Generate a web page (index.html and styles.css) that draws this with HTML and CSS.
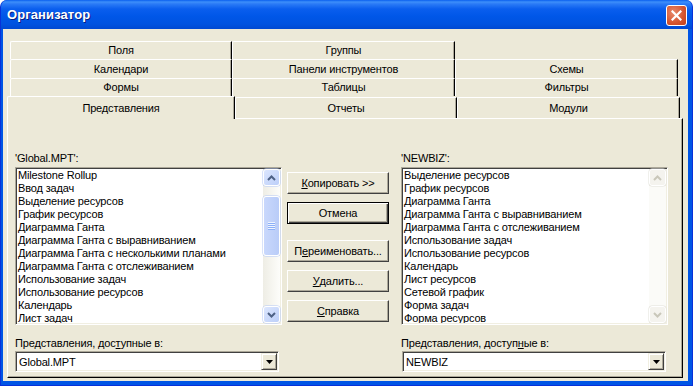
FILE: index.html
```html
<!DOCTYPE html>
<html lang="ru">
<head>
    <meta charset="UTF-8">
    <title>Организатор</title>
    <link rel="stylesheet" href="styles.css">
</head>
<body>
    <div class="window">
        <div class="titlebar">
            <span class="title">Организатор</span>
            <div class="close-btn">
                <svg width="11" height="11" viewBox="0 0 11 11"><path d="M1.5 1.5 L9.5 9.5 M9.5 1.5 L1.5 9.5" stroke="#fff" stroke-width="2.2" stroke-linecap="square"/></svg>
            </div>
        </div>
        <div class="client">
            <div class="tabs">
                <div class="tab-row">
                    <div class="tab tab-first">Поля</div>
                    <div class="tab">Группы</div>
                </div>
                <div class="tab-row">
                    <div class="tab tab-first">Календари</div>
                    <div class="tab">Панели инструментов</div>
                    <div class="tab">Схемы</div>
                </div>
                <div class="tab-row">
                    <div class="tab tab-first">Формы</div>
                    <div class="tab">Таблицы</div>
                    <div class="tab">Фильтры</div>
                </div>
                <div class="tab-row tab-row-front">
                    <div class="tab tab-active">Представления</div>
                    <div class="tab tab-mid">Отчеты</div>
                    <div class="tab">Модули</div>
                </div>
            </div>
            <div class="panel">
                <div class="side">
                    <div class="label">'Global.MPT':</div>
                    <div class="list">
                        <div class="items">
                            <div class="item">Milestone Rollup</div>
                            <div class="item">Ввод задач</div>
                            <div class="item">Выделение ресурсов</div>
                            <div class="item">График ресурсов</div>
                            <div class="item">Диаграмма Ганта</div>
                            <div class="item">Диаграмма Ганта с выравниванием</div>
                            <div class="item">Диаграмма Ганта с несколькими планами</div>
                            <div class="item">Диаграмма Ганта с отслеживанием</div>
                            <div class="item">Использование задач</div>
                            <div class="item">Использование ресурсов</div>
                            <div class="item">Календарь</div>
                            <div class="item">Лист задач</div>
                        </div>
                        <div class="scrollbar">
                            <div class="sb-btn">
                                <svg width="9" height="6" viewBox="0 0 9 6"><polyline points="1,5 4.5,1.5 8,5" fill="none" stroke="#4D6185" stroke-width="2"/></svg>
                            </div>
                            <div class="sb-track">
                                <div class="sb-thumb"><div class="grip"></div></div>
                            </div>
                            <div class="sb-btn">
                                <svg width="9" height="6" viewBox="0 0 9 6"><polyline points="1,1 4.5,4.5 8,1" fill="none" stroke="#4D6185" stroke-width="2"/></svg>
                            </div>
                        </div>
                    </div>
                    <div class="label label-bottom">Представления, дос<u>т</u>упные в:</div>
                    <div class="combo">
                        <span class="combo-text">Global.MPT</span>
                        <div class="combo-btn">
                            <svg width="7" height="4" viewBox="0 0 7 4"><polygon points="0,0 7,0 3.5,4" fill="#000"/></svg>
                        </div>
                    </div>
                </div>

                <div class="actions">
                    <div class="btn"><u>К</u>опировать &gt;&gt;</div>
                    <div class="btn btn-default">Отмена</div>
                    <div class="btn btn-gap">П<u>е</u>реименовать...</div>
                    <div class="btn"><u>У</u>далить...</div>
                    <div class="btn"><u>С</u>правка</div>
                </div>

                <div class="side">
                    <div class="label">'NEWBIZ':</div>
                    <div class="list">
                        <div class="items">
                            <div class="item">Выделение ресурсов</div>
                            <div class="item">График ресурсов</div>
                            <div class="item">Диаграмма Ганта</div>
                            <div class="item">Диаграмма Ганта с выравниванием</div>
                            <div class="item">Диаграмма Ганта с отслеживанием</div>
                            <div class="item">Использование задач</div>
                            <div class="item">Использование ресурсов</div>
                            <div class="item">Календарь</div>
                            <div class="item">Лист ресурсов</div>
                            <div class="item">Сетевой график</div>
                            <div class="item">Форма задач</div>
                            <div class="item">Форма ресурсов</div>
                        </div>
                        <div class="scrollbar scrollbar-off">
                            <div class="sb-btn">
                                <svg width="9" height="6" viewBox="0 0 9 6"><polyline points="1,5 4.5,1.5 8,5" fill="none" stroke="#C9C7BA" stroke-width="2"/></svg>
                            </div>
                            <div class="sb-track"></div>
                            <div class="sb-btn">
                                <svg width="9" height="6" viewBox="0 0 9 6"><polyline points="1,1 4.5,4.5 8,1" fill="none" stroke="#C9C7BA" stroke-width="2"/></svg>
                            </div>
                        </div>
                    </div>
                    <div class="label label-bottom">Представления, доступ<u>н</u>ые в:</div>
                    <div class="combo">
                        <span class="combo-text">NEWBIZ</span>
                        <div class="combo-btn">
                            <svg width="7" height="4" viewBox="0 0 7 4"><polygon points="0,0 7,0 3.5,4" fill="#000"/></svg>
                        </div>
                    </div>
                </div>
            </div>
        </div>
    </div>
</body>
</html>
```

FILE: styles.css
```css
/* Base */
html,
body {
    margin: 0;
    background: #fff;
    font-family: 'Liberation Sans', Arial, sans-serif;
    font-size: 11px;
    letter-spacing: -0.15px;
    color: #000;
}

u {
    text-decoration: underline;
    text-underline-offset: 1px;
}

/* Window frame */
.window {
    width: 693px;
    height: 386px;
    box-sizing: border-box;
    padding-bottom: 4px;
    background: #0055E5;
    border-left: 1px solid #0831D9;
    border-right: 1px solid #0831D9;
    border-bottom: 1px solid #0831D9;
    border-radius: 7px 7px 0 0;
    display: flex;
    flex-direction: column;
}

.titlebar {
    height: 29px;
    flex: none;
    display: flex;
    align-items: center;
    justify-content: space-between;
    padding: 0 5px 0 6px;
    border-radius: 7px 7px 0 0;
    background: linear-gradient(to bottom, #0A5FEF 0, #3D8FFA 2px, #2A7AF6 4px, #0A5EEE 9px, #0057E8 16px, #0053E0 24px, #0049D2 29px);
}

.title {
    color: #fff;
    font-weight: bold;
    font-size: 13px;
    text-shadow: 1px 1px #0A1E80;
    letter-spacing: 0.1px;
}

.close-btn {
    width: 19px;
    height: 19px;
    border: 1px solid #fff;
    border-radius: 3px;
    display: flex;
    align-items: center;
    justify-content: center;
    background: radial-gradient(circle at 35% 35%, #E88A6C, #D4542F 60%, #C2401A);
    margin-top: 1px;
}

.client {
    flex: 1;
    margin: 0 4px 0 2px;
    background: #ECE9D8;
    display: flex;
    flex-direction: column;
}

/* Tabs */
.tabs {
    padding-top: 12px;
}

.tab-row {
    display: flex;
    height: 18px;
    padding-left: 7px;
}

.tab-row:nth-child(2) {
    height: 19px;
}

.tab-row-front {
    height: 22px;
    padding-left: 4px;
    align-items: flex-end;
}

.tab {
    width: 223px;
    box-sizing: border-box;
    height: 100%;
    display: flex;
    align-items: center;
    justify-content: center;
    border-top: 1px solid #fff;
    border-left: 1px solid #fff;
    border-right: 1px solid #000;
    box-shadow: inset -1px 0 #ACA899;
    border-radius: 2px 0 0 0;
    padding-bottom: 1px;
}

.tab-first {
    width: 222px;
}

.tab-row-front .tab {
    height: 21px;
}

.tab-row-front .tab-active {
    width: 228px;
    height: 23px;
    margin-bottom: -1px;
    position: relative;
    z-index: 1;
    background: #ECE9D8;
}

.tab-row-front .tab-mid {
    width: 222px;
}

/* Panel */
.panel {
    margin-left: 4px;
    width: 676px;
    height: 260px;
    box-sizing: border-box;
    border: 1px solid;
    border-color: #fff #000 #000 #fff;
    box-shadow: inset -1px -1px #ACA899;
    padding: 32px 0 0 7px;
    display: flex;
}

.side {
    width: 267px;
    display: flex;
    flex-direction: column;
}

.label {
    height: 14px;
    line-height: 14px;
    margin-bottom: 2px;
}

.label-bottom {
    margin-top: 11px;
    margin-bottom: 1px;
}

.list {
    height: 158px;
    box-sizing: border-box;
    border: 1px solid;
    border-color: #ACA899 #fff #fff #ACA899;
    background: #fff;
    display: flex;
    padding: 1px;
    box-shadow: inset 1px 1px #404040, inset -1px -1px #F1EFE2;
}

.items {
    flex: 1;
    overflow: hidden;
    padding-left: 1px;
}

.item {
    height: 13px;
    line-height: 13px;
    white-space: nowrap;
}

/* Scrollbar */
.scrollbar {
    width: 17px;
    display: flex;
    flex-direction: column;
    background: linear-gradient(to right, #EEEDE5, #FDFDFA);
}

.sb-btn {
    height: 17px;
    box-sizing: border-box;
    border: 1px solid #fff;
    border-radius: 3px;
    background: linear-gradient(135deg, #DCE6FD, #BCCFF9);
    box-shadow: 0 0 0 0.5px #B4C8F6;
    display: flex;
    align-items: center;
    justify-content: center;
}

.sb-track {
    flex: 1;
    padding-top: 10px;
}

.sb-thumb {
    height: 60px;
    box-sizing: border-box;
    border: 1px solid #fff;
    border-radius: 3px;
    background: linear-gradient(to right, #C9D8FC, #B9CCF8);
    box-shadow: 0 0 0 0.5px #B4C8F6;
    display: flex;
    align-items: center;
    justify-content: center;
}

.grip {
    width: 7px;
    height: 8px;
    background: repeating-linear-gradient(to bottom, #EEF4FE 0, #EEF4FE 1px, #8CB0F8 1px, #8CB0F8 2px);
}

.scrollbar-off {
    background: #FBFBF8;
}

.scrollbar-off .sb-btn {
    background: #F4F3EE;
    border-color: #fff;
    box-shadow: 0 0 0 0.5px #E2E1D9;
}

/* Combo box */
.combo {
    width: 264px;
    height: 21px;
    box-sizing: border-box;
    border: 1px solid;
    border-color: #ACA899 #fff #fff #ACA899;
    background: #fff;
    padding: 1px;
    box-shadow: inset 1px 1px #404040, inset -1px -1px #F1EFE2;
    display: flex;
    align-items: center;
}

.side:last-child .combo {
    margin-left: 1px;
}

.combo-text {
    flex: 1;
    padding-left: 2px;
}

.combo-btn {
    width: 16px;
    height: 17px;
    box-sizing: border-box;
    background: #ECE9D8;
    border: 1px solid;
    border-color: #F1EFE2 #404040 #404040 #F1EFE2;
    box-shadow: inset 1px 1px #fff, inset -1px -1px #ACA899;
    display: flex;
    align-items: center;
    justify-content: center;
}

/* Buttons */
.actions {
    width: 102px;
    margin: 0 12px 0 5px;
    padding-top: 21px;
    display: flex;
    flex-direction: column;
    gap: 8px;
}

.btn {
    height: 22px;
    box-sizing: border-box;
    border: 1px solid;
    border-color: #fff #404040 #404040 #fff;
    box-shadow: inset -1px -1px #ACA899;
    display: flex;
    align-items: center;
    justify-content: center;
    padding-bottom: 1px;
}

.btn-default {
    border: 1px solid #000;
    box-shadow: inset 1px 1px #fff, inset -1px -1px #404040, inset -2px -2px #ACA899;
}

.btn-gap {
    margin-top: 8px;
}
```
